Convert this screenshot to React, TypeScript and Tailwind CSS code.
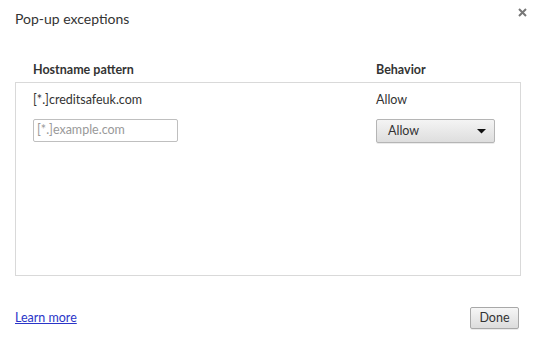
import React from "react";

export default function App() {
  return (
    <div
      className="w-[536px] h-[341px] bg-white text-[#333] flex flex-col relative"
      style={{ fontFamily: 'Lato, "Noto Sans", sans-serif' }}
    >
      <div className="h-[34px] flex items-start justify-between pl-[15px] pr-[9px]">
        <div className="text-[14px] leading-[18px] mt-[10px] text-[#333]">Pop-up exceptions</div>
        <div className="mt-[6px] text-[#777] text-[13px] font-bold leading-[12px]">
          <svg width="9" height="9" viewBox="0 0 9 9" className="mt-[2px]">
            <path d="M1 1 L8 8 M8 1 L1 8" stroke="#777" strokeWidth="2" />
          </svg>
        </div>
      </div>
      <div className="h-[48px] flex items-end pb-[4px] text-[12.5px] font-bold leading-[16px] text-[#333]">
        <div className="pl-[33px] w-[376px]">Hostname pattern</div>
        <div>Behavior</div>
      </div>
      <div className="mx-[15px] w-[506px] h-[194px] border border-[#d9d9d9] flex flex-col">
        <div className="h-[33px] flex items-center pt-[1px] text-[12.5px]">
          <div className="pl-[17px] w-[360px]">[*.]creditsafeuk.com</div>
          <div>Allow</div>
        </div>
        <div className="flex items-start mt-[3px]">
          <div className="pl-[17px] w-[360px]">
            <div className="w-[145px] h-[23px] border border-[#bfbfbf] rounded-[2px] flex items-center pl-[3px] text-[12.5px] text-[#999]">
              [*.]example.com
            </div>
          </div>
          <div className="w-[119px] h-[24px] border border-[#b5b5b5] rounded-[2px] bg-gradient-to-b from-[#f4f4f4] to-[#dedede] flex items-center justify-between pl-[11px] pr-[8px] text-[12.5px] text-[#333] shadow-[0_1px_0_rgba(0,0,0,0.08)]">
            <span>Allow</span>
            <svg width="9" height="5" viewBox="0 0 9 5">
              <path d="M0 0 L9 0 L4.5 4.5 Z" fill="#111" />
            </svg>
          </div>
        </div>
      </div>
      <div className="flex-1 flex items-start justify-between pl-[15px] pr-[17px] pt-[31px]">
        <a className="text-[12.5px] text-[#2a35c8] underline mt-[3px] leading-[16px]" href="#">
          Learn more
        </a>
        <div className="w-[49px] h-[22px] border border-[#a8a8a8] rounded-[2px] bg-gradient-to-b from-[#f6f6f6] to-[#dcdcdc] flex items-center justify-center text-[12.5px] text-[#333] shadow-[0_1px_0_rgba(0,0,0,0.08)]">
          Done
        </div>
      </div>
    </div>
  );
}
